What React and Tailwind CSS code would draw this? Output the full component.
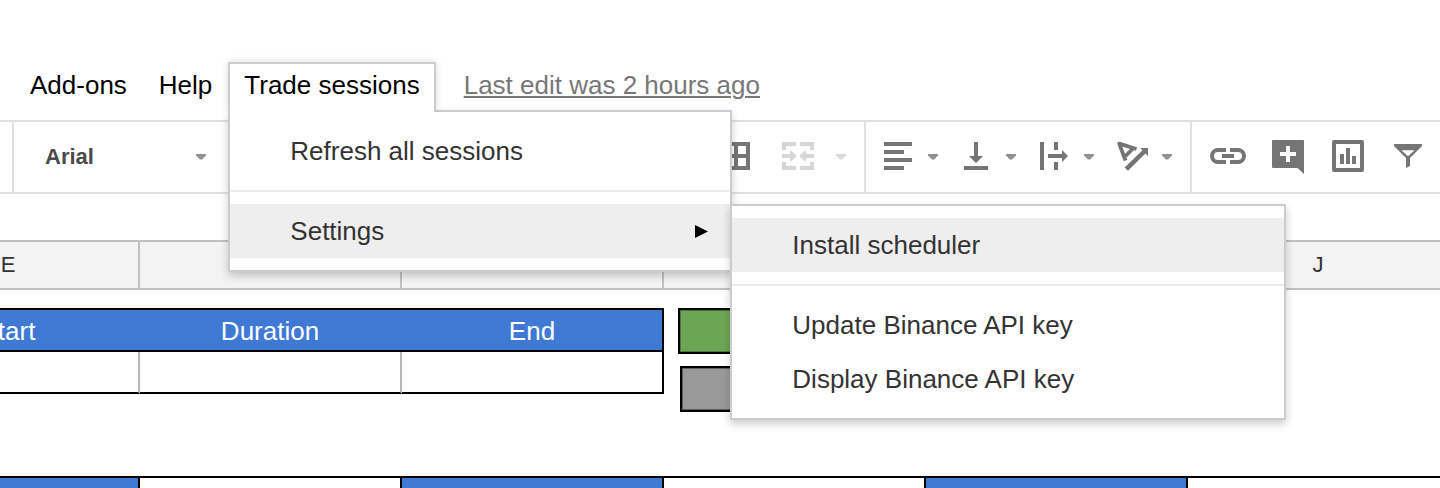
const columns = ["E", "F", "G", "H", "I", "J"];

function Caret({ className = "text-[#909090]" }) {
  return (
    <svg className={`h-2 w-2.5 shrink-0 ${className}`} viewBox="0 0 10 8" fill="currentColor" aria-hidden="true">
      <path d="M0 2h10v1.500L6 7.500H4L0 3.500z" />
    </svg>
  );
}

function Icon({ children }) {
  return (
    <svg className="size-9 shrink-0" viewBox="0 0 36 36" fill="currentColor" aria-hidden="true">
      {children}
    </svg>
  );
}

const icons = {
  borders: <path fillRule="evenodd" d="M4 4h28v28H4zM8 8v8h8V8zM20 8v8h8V8zM8 20v8h8v-8zM20 20v8h8v-8z" />,
  merge: (
    <path d="M2 4h14v4H6v4H2zM20 4h14v8h-4V8H20zM2 24h4v4h10v4H2zM30 24h4v8H20v-4h10zM2 16h8v-4l6 5v2l-6 5v-4H2zM34 16h-8v-4l-6 5v2l6 5v-4h8z" />
  ),
  align: <path d="M4 4h28v4H4zM4 12h20v4H4zM4 20h28v4H4zM4 28h20v4H4z" />,
  bottom: <path d="M16 4h4v14h5l-7 7-7-7h5zM6 28h24v4H6z" />,
  wrap: <path d="M4 4h4v28H4zM18 4h4v8h-4zM18 24h4v8h-4zM12 16h14v-4l6 6-6 6v-4H12z" />,
  rotate: (
    <>
      <path
        d="M11.500 22.500L5.200 5.600l17.300 5.400M11.500 18l7-7"
        fill="none"
        stroke="currentColor"
        strokeWidth="3.800"
        strokeLinejoin="round"
      />
      <path d="M26.500 10H34v8l-2.600-2.500L14 32.800 10.600 29.500 28.500 12.300z" />
    </>
  ),
  link: (
    <>
      <path d="M16 12H8a6 6 0 0 0 0 12h8M20 12h8a6 6 0 0 1 0 12h-8" fill="none" stroke="currentColor" strokeWidth="4" />
      <path d="M12 16h12v4H12z" />
    </>
  ),
  comment: (
    <path
      fillRule="evenodd"
      d="M3 2h30a1 1 0 0 1 1 1v33l-6.500-6H3a1 1 0 0 1-1-1V3a1 1 0 0 1 1-1zM16 8v6h-6v4h6v6h4v-6h6v-4h-6V8z"
    />
  ),
  chart: (
    <path
      fillRule="evenodd"
      d="M4 2h28a2 2 0 0 1 2 2v28a2 2 0 0 1-2 2H4a2 2 0 0 1-2-2V4a2 2 0 0 1 2-2zM6 6v24h24V6zM10 16h4v10h-4zM16 10h4v16h-4zM22 18h4v8h-4z"
    />
  ),
  filter: <path fillRule="evenodd" d="M4 6h28v2L20 20v8l-4 2V20L4 8zM11.500 12.300h13L18 18.300z" />,
};

function DropButton({ icon, label }) {
  return (
    <button type="button" aria-label={label} className="flex w-[78px] items-center gap-3 pl-2">
      <Icon>{icons[icon]}</Icon>
      <Caret />
    </button>
  );
}

function ToolButton({ icon, label }) {
  return (
    <button type="button" aria-label={label} className="flex w-15 items-center justify-center">
      <Icon>{icons[icon]}</Icon>
    </button>
  );
}

function MenuItem({ children, active, arrow }) {
  return (
    <button
      type="button"
      role="menuitem"
      className={`flex h-[54px] w-full items-center justify-between pr-[22px] pl-15 text-left text-[#333] ${active ? "bg-[#eee]" : ""}`}
    >
      {children}
      {arrow && (
        <svg className="size-[13px] text-black" viewBox="0 0 13 13" fill="currentColor" aria-hidden="true">
          <path d="M0 0l13 6.500L0 13z" />
        </svg>
      )}
    </button>
  );
}

const menuBox = "border-2 border-[#ccc] bg-white py-3 shadow-[0_4px_8px_rgba(0,0,0,0.2)]";

function Divider() {
  return <li role="separator" className="my-3 h-0.5 bg-[#ebebeb]" />;
}

function TradeMenu() {
  return (
    <ul role="menu" className={`absolute top-12 left-0 z-10 w-[504px] ${menuBox}`}>
      <li role="none">
        <MenuItem>Refresh all sessions</MenuItem>
      </li>
      <Divider />
      <li role="none" className="relative">
        <MenuItem active arrow>
          Settings
        </MenuItem>
        <ul role="menu" className={`absolute top-0 left-full w-[556px] ${menuBox}`}>
          <li role="none">
            <MenuItem active>Install scheduler</MenuItem>
          </li>
          <Divider />
          <li role="none">
            <MenuItem>Update Binance API key</MenuItem>
          </li>
          <li role="none">
            <MenuItem>Display Binance API key</MenuItem>
          </li>
        </ul>
      </li>
    </ul>
  );
}

function MenuBar() {
  return (
    <nav className="flex items-start pt-[62px] pb-2 pl-3.5 text-black">
      <button type="button" className="h-[50px] px-4 pb-1">
        Add-ons
      </button>
      <button type="button" className="h-[50px] px-4 pb-1">
        Help
      </button>
      <div className="relative">
        <button
          type="button"
          aria-haspopup="menu"
          aria-expanded="true"
          className="relative z-20 h-[50px] border-2 border-b-0 border-[#ccc] bg-white px-3.5 pb-1.5 shadow-[0_0_8px_rgba(0,0,0,0.15)] [clip-path:inset(-8px_-8px_0_-8px)]"
        >
          Trade sessions
        </button>
        <TradeMenu />
      </div>
      <a
        href="#history"
        className="ml-7 flex h-[50px] items-center pb-1 text-[#777] underline decoration-2 underline-offset-2"
      >
        Last edit was 2 hours ago
      </a>
    </nav>
  );
}

function Toolbar() {
  return (
    <div className="flex h-[74px] shrink-0 border-y-2 border-[#e0e0e0] pl-3 text-[#757575]">
      <div className="flex w-[854px] shrink-0 items-center justify-between border-x-2 border-[#e0e0e0] pr-[18px] pb-0.5">
        <label className="grid w-[192px] items-center">
          <select
            aria-label="Font"
            className="col-start-1 row-start-1 h-10 appearance-none bg-transparent pt-0.5 pl-[31px] text-[22px] font-bold text-[#4a4a4a]"
          >
            <option>Arial</option>
          </select>
          <span className="pointer-events-none col-start-1 row-start-1 justify-self-end">
            <Caret />
          </span>
        </label>
        <div className="flex items-center gap-[26px]">
          <button type="button" aria-label="Borders">
            <Icon>{icons.borders}</Icon>
          </button>
          <button type="button" aria-label="Merge cells" disabled className="flex items-center gap-5 text-[#d6d6d6]">
            <Icon>{icons.merge}</Icon>
            <Caret className="text-[#dcdcdc]" />
          </button>
        </div>
      </div>
      <div className="flex shrink-0 items-center border-r-2 border-[#e0e0e0] px-1.5 pb-0.5">
        <DropButton icon="align" label="Horizontal align" />
        <DropButton icon="bottom" label="Vertical align" />
        <DropButton icon="wrap" label="Text wrapping" />
        <DropButton icon="rotate" label="Text rotation" />
      </div>
      <div className="flex shrink-0 items-center pb-0.5 pl-1.5">
        <ToolButton icon="link" label="Insert link" />
        <ToolButton icon="comment" label="Insert comment" />
        <ToolButton icon="chart" label="Insert chart" />
        <ToolButton icon="filter" label="Filter" />
      </div>
    </div>
  );
}

function Sheet() {
  return (
    <main className="relative mt-[46px] min-h-0 flex-1 overflow-hidden">
      <table className="-ml-[122px] w-[calc(100%+132px)] table-fixed border-separate border-spacing-0">
        <colgroup>
          <col className="w-[262px]" />
          <col className="w-[262px]" />
          <col className="w-[262px]" />
          <col className="w-[262px]" />
          <col className="w-[262px]" />
          <col />
        </colgroup>
        <thead>
          <tr className="h-[50px] bg-[#f3f3f3] text-[22px] text-[#333]">
            {columns.map((name) => (
              <th key={name} scope="col" className="border-y-2 border-r-2 border-[#c0c0c0] p-0 leading-6 font-normal">
                {name}
              </th>
            ))}
          </tr>
        </thead>
        <tbody>
          <tr className="h-5">
            <td colSpan={3} className="border-b-2 border-black p-0" />
            <td colSpan={3} className="p-0" />
          </tr>
          <tr className="h-[42px] text-center text-white">
            <td className="border-b-2 border-black bg-[#4079d4] p-0 pt-0.5 pr-0.5 leading-8">Start</td>
            <td className="border-b-2 border-black bg-[#4079d4] p-0 pt-0.5 pr-0.5 leading-8">Duration</td>
            <td className="border-r-2 border-b-2 border-black bg-[#4079d4] p-0 pt-0.5 leading-8">End</td>
            <td colSpan={3} className="p-0" />
          </tr>
          <tr className="h-[42px]">
            <td className="border-r-2 border-b-2 border-r-[#b7b7b7] border-b-black p-0" />
            <td className="border-r-2 border-b-2 border-r-[#b7b7b7] border-b-black p-0" />
            <td className="border-r-2 border-b-2 border-black p-0" />
            <td colSpan={3} className="p-0" />
          </tr>
          <tr className="h-[84px]">
            <td colSpan={6} className="border-b-2 border-black p-0" />
          </tr>
          <tr className="h-[42px]">
            <td className="border-r-2 border-black bg-[#4079d4] p-0" />
            <td className="border-r-2 border-black p-0" />
            <td className="border-r-2 border-black bg-[#4079d4] p-0" />
            <td className="border-r-2 border-black p-0" />
            <td className="border-r-2 border-black bg-[#4079d4] p-0" />
            <td className="p-0" />
          </tr>
        </tbody>
      </table>
      <button
        type="button"
        aria-label="Green drawing"
        className="absolute top-[68px] left-[678px] h-[46px] w-[200px] border-2 border-black bg-[#6ca654] shadow-[inset_0_0_0_1px_#4a7539]"
      />
      <button
        type="button"
        aria-label="Gray drawing"
        className="absolute top-[126px] left-[680px] h-[46px] w-[200px] border-2 border-black bg-[#999] shadow-[inset_0_0_0_1px_#606060]"
      />
    </main>
  );
}

export default function App() {
  return (
    <div className="flex h-screen flex-col overflow-hidden bg-white font-['Liberation_Sans',Arial,sans-serif] text-[26px] leading-8">
      <header className="relative z-10 shrink-0">
        <div className="relative z-10">
          <MenuBar />
        </div>
        <Toolbar />
      </header>
      <Sheet />
    </div>
  );
}
